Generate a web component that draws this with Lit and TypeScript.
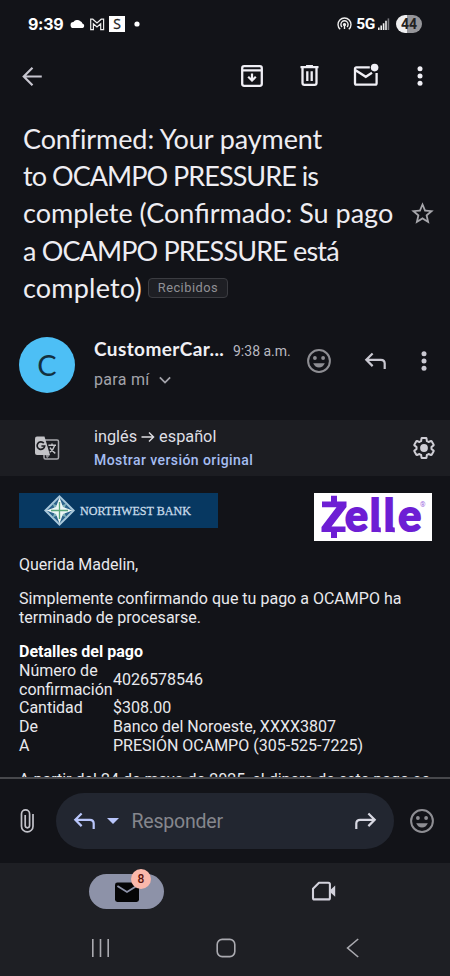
import { LitElement, html, css, svg } from "lit";
import { customElement } from "lit/decorators.js";

const icon = (size: number, body: unknown, cls = "") =>
  html`<svg class="ic ${cls}" width=${size} height=${size} viewBox="0 0 24 24">${body}</svg>`;

const back = svg`<path class="s" stroke-width="2.5" d="M22.6 12H3M12 2 2 12 12 22"/>`;
const archive = svg`<rect class="s" stroke-width="2.3" x="2.2" y="2.2" width="19.6" height="19.6" rx="2"/><path class="s" stroke-width="2.2" d="M3 6.3H21M12 9.4V16"/><path class="s" stroke-width="2.2" d="M8.2 12.8 12 16.5 15.8 12.8"/>`;
const trash = svg`<path class="s" stroke-width="2.4" d="M2.6 3.2H21.4M8.4 2.2H15.6M4.7 4V19.8Q4.7 21.8 6.7 21.8H17.3Q19.3 21.8 19.3 19.8V4M9.7 7.6V17.8M14.3 7.6V17.8"/>`;
const unread = svg`<path class="s" stroke-width="2.3" d="M15.8 3.4H2.4Q1 3.4 1 4.8V19.3Q1 20.7 2.4 20.7H21.2Q22.6 20.7 22.6 19.3V9M1.6 6.2 11.8 12.8 18 8.8"/><circle class="f" cx="20.6" cy="3.6" r="3.8"/>`;
const more = svg`<circle class="f" cx="12" cy="4.8" r="2.5"/><circle class="f" cx="12" cy="12" r="2.5"/><circle class="f" cx="12" cy="19.2" r="2.5"/>`;
const star = svg`<path class="f" d="M22 9.24l-7.19-.62L12 2 9.19 8.63 2 9.24l5.46 4.73L5.82 21 12 17.27 18.18 21l-1.63-7.03L22 9.24zM12 15.4l-3.76 2.27 1-4.28-3.32-2.88 4.38-.38L12 6.1l1.71 4.04 4.38.38-3.32 2.88 1 4.28L12 15.4z"/>`;
const smile = svg`<circle class="s" stroke-width="2" cx="12" cy="12" r="10.9"/><circle class="f" cx="7.9" cy="9" r="1.9"/><circle class="f" cx="16.1" cy="9" r="1.9"/><path class="f" d="M6.2 14.2H17.8Q16 18.4 12 18.4T6.2 14.2Z"/>`;
const reply = svg`<path class="s" stroke-width="2.3" d="M9 3.6 2.4 10.2 9 16.8M3 10.2H17.6Q21.6 10.2 21.6 14.2V19.8"/>`;
const forward = svg`<path class="s" stroke-width="2.3" d="M15 3.6 21.6 10.2 15 16.8M21 10.2H6.4Q2.4 10.2 2.4 14.2V19.8"/>`;
const gear = svg`<path class="s" stroke-width="2" stroke-linejoin="round" d="M19.43 12.98c.04-.32.07-.64.07-.98 0-.34-.03-.66-.07-.98l2.11-1.65c.19-.15.24-.42.12-.64l-2-3.46c-.09-.16-.26-.25-.44-.25-.06 0-.12.01-.17.03l-2.49 1c-.52-.4-1.08-.73-1.69-.98l-.38-2.65C14.46 2.18 14.25 2 14 2h-4c-.25 0-.46.18-.49.42l-.38 2.65c-.61.25-1.17.59-1.69.98l-2.49-1c-.06-.02-.12-.03-.18-.03-.17 0-.34.09-.43.25l-2 3.46c-.13.22-.07.49.12.64l2.11 1.65c-.04.32-.07.65-.07.98 0 .33.03.66.07.98l-2.11 1.65c-.19.15-.24.42-.12.64l2 3.46c.09.16.26.25.44.25.06 0 .12-.01.17-.03l2.49-1c.52.4 1.08.73 1.69.98l.38 2.65c.03.24.24.42.49.42h4c.25 0 .46-.18.49-.42l.38-2.65c.61-.25 1.17-.59 1.69-.98l2.49 1c.06.02.12.03.18.03.17 0 .34-.09.43-.25l2-3.46c.12-.22.07-.49-.12-.64l-2.11-1.65z"/><circle class="f" cx="12" cy="12" r="3.9"/>`;
const clip = svg`<path class="s" stroke-width="1.7" d="M18 5V17.2A5.75 5.75 0 0 1 6.5 17.2V5A4 4 0 0 1 14.6 5V16.6A2.2 2.2 0 0 1 10.2 16.6V6"/>`;
const chevron = svg`<path class="s" stroke-width="2" d="M6.4 9.2 12 14.8 17.6 9.2"/>`;

@customElement("app-root")
export class AppRoot extends LitElement {
  static styles = css`
    :host { display: flex; flex-direction: column; width: 450px; height: 976px; overflow: hidden; background: #121318; color: #e8e8ed; font-family: Roboto, sans-serif; }
    * { box-sizing: border-box; }
    .ic { display: block; flex: none; overflow: visible; }
    .s { fill: none; stroke: currentColor; }
    .f { fill: currentColor; }
    .row { display: flex; align-items: center; }
    .grow { flex: 1; }
    .art { display: block; flex: none; }

    .status { height: 48px; padding: 0 28px; color: #fff; }
    .time { font: 700 16px Inter, sans-serif; letter-spacing: -0.3px; width: 42px; white-space: nowrap; }
    .five { font-weight: 700; font-size: 15.5px; margin: 0 3px 0 4px; letter-spacing: -0.4px; }
    .battery { margin-left: 6px; width: 26px; height: 18px; border-radius: 9px; background: linear-gradient(90deg, #efeff1 44%, #96969a 44%); color: #222; font: 700 14px/18px Roboto, sans-serif; text-align: center; }

    .tools { height: 56px; padding: 0 16px 0 18px; color: #f0eff5; }
    .cell { width: 28px; display: flex; justify-content: center; }
    .acts { display: flex; gap: 29px; }
    .last { margin-left: -3px; }
    .back { color: #c7c6d0; }

    .subject { height: 203px; padding: 15px 14.5px 0 23px; }
    .title { margin: 0; font: 400 27px/37.2px Lato, sans-serif; color: #eeedf2; white-space: nowrap; width: 386px; }
    .ln { display: block; }
    .l1 { letter-spacing: -0.1px; }
    .l2 { letter-spacing: -0.95px; }
    .l4 { letter-spacing: -0.85px; }
    .l5 { display: flex; align-items: center; }
    .l5 span:first-child { letter-spacing: 0.2px; }
    .chip { height: 20px; width: 80px; margin: 1px 0 0 6px; border: 1px solid #3b3c41; border-radius: 4px; background: #1e1f24; color: #909095; font: 400 12.8px/18px Roboto, sans-serif; text-align: center; letter-spacing: 0.5px; }
    .star { color: #a6a6ab; }

    .sender { height: 113px; padding: 30px 14px 0 19px; display: flex; align-items: flex-start; }
    .avatar { width: 56px; height: 56px; border-radius: 50%; background: #4dbff5; color: #12303f; font: 400 29px/56px Lato, sans-serif; text-align: center; margin-right: 19px; }
    .who { width: 213px; white-space: nowrap; }
    .name { display: flex; align-items: baseline; height: 26px; line-height: 26px; margin-top: -1px; }
    .name b { font: 700 19px/26px Lato, sans-serif; color: #f0f0f4; width: 139px; letter-spacing: 0.4px; }
    .name span { font-size: 14px; color: #b9b9c0; }
    .to { display: flex; align-items: center; gap: 4px; font-size: 16px; height: 24px; margin-top: 5.5px; color: #a3a3aa; letter-spacing: 0.3px; }
    .sicons { display: flex; margin-top: 10px; height: 28px; align-items: center; color: #c9c8d1; }
    .sicons .ic:nth-child(2) { margin: 0 25px 0 33px; }
    .gray { color: #8e8e93; }

    .translate { height: 56px; background: #1c1d22; padding: 0 13px 0 34px; }
    .lang { width: 318px; margin-left: 34px; white-space: nowrap; padding-top: 1px; }
    .pair { display: flex; align-items: center; gap: 4px; font-size: 16.3px; line-height: 24px; color: #dfdfe4; }
    .link { font: 500 14px/23px Roboto, sans-serif; color: #a5bdf2; letter-spacing: 0.43px; }
    .cog { color: #cfced5; }

    .mail { height: 301px; overflow: hidden; padding: 17px 18px 0 19px; font-size: 16px; line-height: 18.9px; color: #e9e9ed; }
    .logos { display: flex; justify-content: space-between; align-items: flex-start; height: 63px; }
    .mail p { margin: 0 0 15px; white-space: nowrap; }
    .mail .l6 { letter-spacing: 0.01px; }
    .mail .head { margin: 0; font-weight: 700; color: #fff; }
    .details { display: grid; grid-template-columns: 94px 1fr; align-items: center; margin-bottom: 14.5px; white-space: nowrap; }
    .bank { font: 500 13.3px "Liberation Serif", serif; fill: #c9dcea; }
    .zelle { font: 700 43px Lato, sans-serif; fill: #6d1ed4; stroke: #6d1ed4; stroke-width: 2; }
    .reg { font: 400 7px Roboto, sans-serif; fill: #a06be0; }

    .replybar { height: 86px; border-top: 2px solid #47484c; padding: 0 16px 0 15px; }
    .clip { color: #c3c3ca; }
    .pill { width: 338px; height: 56px; border-radius: 28px; background: #222630; margin: 0 16px 0 17px; padding: 0 17px; color: #d8d8e2; }
    .blue { color: #b9c6fb; }
    .caret { width: 0; height: 0; border: 6px solid transparent; border-top: 6.5px solid #b9c6fb; border-bottom: 0; margin: 0 13px 0 10.5px; }
    .hint { font-size: 19.5px; color: #85868d; letter-spacing: -0.2px; }

    .nav { height: 113px; background: #1e1f24; color: #d3d2dc; }
    .tabs { display: flex; height: 57px; padding: 11px 0 0 89px; }
    .mailtab { position: relative; width: 75px; height: 35px; border-radius: 18px; background: #8d92a8; display: flex; align-items: center; justify-content: center; }
    .badge { position: absolute; left: 42px; top: -5px; width: 20px; height: 20px; border-radius: 50%; background: #fbb8ab; color: #5b130d; font: 500 12px/20px Roboto, sans-serif; text-align: center; }
    .meet { margin: 5px 0 0 147px; }
    .sys { display: flex; padding: 18px 0 0 91px; color: #aaaab0; }
    .home { margin: 0 110px 0 106px; }
  `;

  render() {
    return html`
      <div class="status row">
        <div class="time">9:39</div>
        <svg class="art" width="70" height="18" viewBox="0 0 70 18">
          <path d="M3.7 13A3 3 0 0 1 3.4 7 4.8 4.8 0 0 1 10.4 6.3 3.4 3.4 0 0 1 12.4 8.4 2.4 2.4 0 0 1 12.6 13Z" fill="#fff"/>
          <path d="M20.7 14.6V4.2H22.8L27 8 31.2 4.2H33.6V14.6H30.7V8.8L27 12 23.4 8.8V14.6Z" fill="none" stroke="#eee" stroke-width="1.2"/>
          <rect x="39" y="1" width="16" height="16" fill="#fff"/>
          <text x="47" y="14.2" text-anchor="middle" font-family="Open Sans" font-size="14" fill="#222" stroke="#222" stroke-width=".3">S</text>
          <circle cx="67" cy="9" r="2.6" fill="#fff"/>
        </svg>
        <div class="grow"></div>
        <svg class="art" width="15" height="14" viewBox="0 0 15 14" fill="none" stroke="#eee" stroke-width="1.4">
          <path d="M3.2 12.3A6.5 6.5 0 1 1 11.8 12.3M5 10A3.6 3.6 0 1 1 10 10"/><circle cx="7.5" cy="7.6" r="1" fill="#eee"/><path d="M7.5 8V12"/>
        </svg>
        <div class="five">5G</div>
        <svg class="art" width="12" height="12" viewBox="0 0 12 12"><path d="M0 12V9.5H1.6V12ZM2.4 12V7.6H4V12ZM4.8 12V5.2H6.4V12ZM7.2 12V2.8H8.8V12Z" fill="#eee"/><path d="M9.6 12V.4H11.2V12Z" fill="#77777c"/></svg>
        <div class="battery">44</div>
      </div>

      <div class="tools row">
        <div class="cell back">${icon(21, back)}</div>
        <div class="grow"></div>
        <div class="acts">
          <div class="cell">${icon(24, archive)}</div>
          <div class="cell">${icon(23, trash)}</div>
          <div class="cell">${icon(24, unread)}</div>
          <div class="cell last">${icon(24, more)}</div>
        </div>
      </div>

      <div class="subject row">
        <h1 class="title">
          <span class="ln l1">Confirmed: Your payment</span>
          <span class="ln l2">to OCAMPO PRESSURE is</span>
          <span class="ln l3">complete (Confirmado: Su pago</span>
          <span class="ln l4">a OCAMPO PRESSURE está</span>
          <span class="l5"><span>completo)</span><span class="chip">Recibidos</span></span>
        </h1>
        ${icon(27, star, "star")}
      </div>

      <div class="sender">
        <div class="avatar">C</div>
        <div class="who">
          <div class="name"><b>CustomerCar...</b><span>9:38 a.m.</span></div>
          <div class="to"><span>para mí</span>${icon(22, chevron)}</div>
        </div>
        <div class="sicons">
          ${icon(24, smile, "gray")}
          ${icon(23, reply)}
          ${icon(24, more)}
        </div>
      </div>

      <div class="translate row">
        <svg class="art" width="26" height="26" viewBox="0 0 26 26">
          <rect x="10" y="5" width="14.5" height="19" rx="1.5" fill="none" stroke="#a9a9ae" stroke-width="1.5"/>
          <path d="M3 1.5H10.5L16 20H3Q1 20 1 18V3.5Q1 1.5 3 1.5Z" fill="#c3c3c7"/>
          <path d="M11.5 20H16L13 23.6Z" fill="#8f8f94"/>
          <path d="M9.8 8.1A3.8 3.8 0 1 0 10.7 11H7.4" fill="none" stroke="#1c1d22" stroke-width="1.7"/>
          <path d="M14.4 10.3H22M18 8.6V10.3M20.7 10.5Q19.5 14.5 15.8 17.2M16 12.6Q17.5 15.5 21.3 18.4" fill="none" stroke="#c3c3c7" stroke-width="1.4"/>
        </svg>
        <div class="lang">
          <div class="pair"><span>inglés</span>
            <svg class="art" width="14" height="12" viewBox="0 0 14 12"><path class="s" stroke-width="1.4" d="M.5 6H12.6M8 1.4 12.6 6 8 10.6"/></svg>
            <span>español</span></div>
          <div class="link">Mostrar versión original</div>
        </div>
        ${icon(24, gear, "cog")}
      </div>

      <div class="mail">
        <div class="logos">
          <svg class="art" width="199" height="35" viewBox="0 0 199 35">
            <rect width="199" height="35" fill="#073861"/>
            <path d="M40.5 3.4 54.6 17.5 40.5 31.6 26.4 17.5Z" fill="#2c648c" stroke="#a9c8db" stroke-width="2"/>
            <path d="M33.5 10.5 40.5 13.5 47.5 10.5 44.5 17.5 47.5 24.5 40.5 21.5 33.5 24.5 36.5 17.5Z" fill="#7fb0b8"/>
            <path d="M40.5 4.5 44 14 53.5 17.5 44 21 40.5 30.5 37 21 27.5 17.5 37 14Z" fill="#edf6f6"/>
            <path d="M40.5 9V26M32 17.5H49" stroke="#5aa77c" stroke-width="1.3"/>
            <text class="bank" x="61" y="22" textLength="111" lengthAdjust="spacingAndGlyphs" stroke="#c9dcea" stroke-width=".3">NORTHWEST BANK</text>
          </svg>
          <svg class="art" width="118" height="48" viewBox="0 0 118 48">
            <rect width="118" height="48" fill="#fff"/>
            <path d="M8 8.6H17V2.8H23V8.6H32.5V14L17.5 33.4H31.5V39H23V45H17V39H7.5V34L22.5 14.2H8Z" fill="#6d1ed4"/>
            <text class="zelle" x="31 55.7 69.7 84.2" y="38.2">elle</text>
            <path d="M61.4 33Q61.4 37 66.8 36.8M75.4 33Q75.4 37 80.8 36.8" fill="none" stroke="#6d1ed4" stroke-width="4.8"/>
            <text class="reg" x="106" y="14">®</text>
          </svg>
        </div>
        <p>Querida Madelin,</p>
        <p class="l6">Simplemente confirmando que tu pago a OCAMPO ha<br>terminado de procesarse.</p>
        <p class="head">Detalles del pago</p>
        <div class="details">
          <span>Número de<br>confirmación</span><span>4026578546</span>
          <span>Cantidad</span><span>$308.00</span>
          <span>De</span><span>Banco del Noroeste, XXXX3807</span>
          <span>A</span><span>PRESIÓN OCAMPO (305-525-7225)</span>
        </div>
        <p class="l6">A partir del 24 de mayo de 2025, el dinero de este pago se</p>
      </div>

      <div class="replybar row">
        ${icon(24, clip, "clip")}
        <div class="pill row">
          ${icon(23, reply, "blue")}
          <div class="caret"></div>
          <div class="hint">Responder</div>
          <div class="grow"></div>
          ${icon(23, forward)}
        </div>
        ${icon(24, smile, "gray")}
      </div>

      <div class="nav">
        <div class="tabs">
          <div class="mailtab">
            <svg class="art" width="24" height="20" viewBox="0 0 24 20"><rect width="24" height="19.5" y=".5" rx="2.4" fill="#050506"/><path d="M2.4 4 12 10 21.6 4" fill="none" stroke="#8d92a8" stroke-width="1.9"/></svg>
            <div class="badge">8</div>
          </div>
          <svg class="art meet" width="26" height="24" viewBox="0 0 26 24"><path class="s" stroke-width="2.1" stroke-linejoin="round" d="M8 3.8H17.4Q18.9 3.8 18.9 5.3V18.9Q18.9 20.4 17.4 20.4H3.5Q2 20.4 2 18.9V9.8Z"/><path class="f" d="M19 11.2 24.2 6.4V17.8L19 13Z"/></svg>
        </div>
        <div class="sys">
          <svg class="art" width="19" height="20" viewBox="0 0 19 20"><path class="s" stroke-width="1.6" d="M1.8 1V19M9.5 1V19M17.2 1V19"/></svg>
          <svg class="art home" width="20" height="20" viewBox="0 0 20 20"><rect class="s" stroke-width="1.6" x="1.2" y="1.4" width="17.6" height="17.2" rx="5"/></svg>
          <svg class="art" width="14" height="20" viewBox="0 0 14 20"><path class="s" stroke-width="1.6" d="M12.2 1 1.6 10 12.2 19"/></svg>
        </div>
      </div>
    `;
  }
}
